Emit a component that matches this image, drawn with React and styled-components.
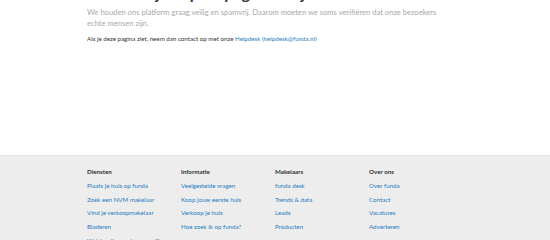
import React from "react";
import styled, { createGlobalStyle } from "styled-components";

const Global = createGlobalStyle`
  html, body { margin: 0; padding: 0; background: #fff; }
  body { font-family: "Lato", "Open Sans", sans-serif; overflow: hidden; }
`;

const Main = styled.main`
  width: 376px;
  margin: 0 auto;
  height: 155px;
  overflow: hidden;
`;

const Title = styled.h1`
  margin: -17px 0 0;
  font-size: 16px;
  line-height: 20px;
  font-weight: 700;
  color: #333;
`;

const Lead = styled.p`
  margin: 4px 0 0;
  max-width: 362px;
  font-size: 7.6px;
  line-height: 11px;
  color: #a8a8a8;
`;

const Note = styled.p`
  margin: 5px 0 0;
  font-size: 6.2px;
  line-height: 10px;
  color: #333;
`;

const InlineLink = styled.a`
  color: #1f7cc0;
  text-decoration: none;
`;

const Footer = styled.footer`
  background: #ededed;
  border-top: 1px solid #e3e3e3;
  padding-top: 9px;
`;

const Columns = styled.div`
  width: 376px;
  margin: 0 auto;
  display: grid;
  grid-template-columns: repeat(4, 1fr);
`;

const Column = styled.div`
  display: flex;
  flex-direction: column;
`;

const ColHead = styled.div`
  font-size: 6.2px;
  line-height: 13.75px;
  font-weight: 700;
  color: #333;
`;

const FootLink = styled.a`
  font-size: 6.2px;
  line-height: 13.75px;
  color: #1f7cc0;
  text-decoration: none;
`;

const columns = [
  { title: "Diensten", links: ["Plaats je huis op funda", "Zoek een NVM makelaar", "Vind je verkoopmakelaar", "Bladeren", "Wat is mijn woning waard?"] },
  { title: "Informatie", links: ["Veelgestelde vragen", "Koop jouw eerste huis", "Verkoop je huis", "Hoe zoek ik op funda?"] },
  { title: "Makelaars", links: ["funda desk", "Trends & data", "Leads", "Producten"] },
  { title: "Over ons", links: ["Over funda", "Contact", "Vacatures", "Adverteren"] },
];

export default function App() {
  return (
    <>
      <Global />
      <Main>
        <Title>Je bent bijna op de pagina die je zoekt</Title>
        <Lead>
          We houden ons platform graag veilig en spamvrij. Daarom moeten we soms verifiëren dat onze bezoekers echte mensen zijn.
        </Lead>
        <Note>
          Als je deze pagina ziet, neem dan contact op met onze <InlineLink href="#">Helpdesk (helpdesk@funda.nl)</InlineLink>
        </Note>
      </Main>
      <Footer>
        <Columns>
          {columns.map((c) => (
            <Column key={c.title}>
              <ColHead>{c.title}</ColHead>
              {c.links.map((l) => (
                <FootLink key={l} href="#">{l}</FootLink>
              ))}
            </Column>
          ))}
        </Columns>
      </Footer>
    </>
  );
}
